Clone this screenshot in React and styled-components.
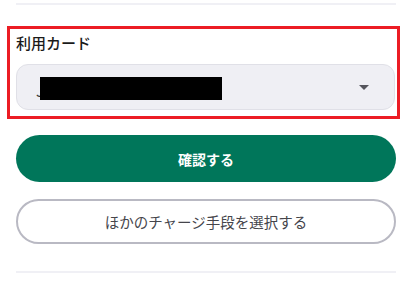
import React from 'react';
import styled, { createGlobalStyle } from 'styled-components';

const GlobalStyle = createGlobalStyle`
  html, body {
    margin: 0;
    padding: 0;
    background: #fff;
    font-family: "Noto Sans CJK JP", "Noto Sans", sans-serif;
  }
`;

const Page = styled.div`
  width: 412px;
  padding: 3px 16px 0;
  box-sizing: border-box;
`;

const Divider = styled.div`
  height: 2px;
  background: #f0f0f5;
  margin-top: ${props => props.top || 0}px;
`;

const Highlight = styled.section`
  margin: 21px -4px 0 -9px;
  border: 3px solid #ec1c24;
  padding: 3px 2px 6px 6px;
`;

const Label = styled.div`
  font-size: 15px;
  line-height: 22px;
  font-weight: 500;
  color: #1a1a1a;
`;

const Select = styled.div`
  position: relative;
  margin-top: 10px;
  height: 46px;
  box-sizing: border-box;
  border: 1px solid #e0e0e7;
  border-radius: 12px;
  background: #efeff4;
  display: flex;
  align-items: center;
  padding: 0 25px 0 19px;
`;

const CardText = styled.span`
  flex: 1;
  font-size: 15px;
  color: #333;
  padding-top: 6px;
`;

const Redact = styled.span`
  position: absolute;
  left: 23px;
  top: 12px;
  width: 182px;
  height: 23px;
  background: #000;
`;

const Caret = styled.span`
  width: 0;
  height: 0;
  border-left: 5px solid transparent;
  border-right: 5px solid transparent;
  border-top: 5px solid #55555c;
`;

const Button = styled.button`
  display: block;
  width: 100%;
  box-sizing: border-box;
  font-family: inherit;
  cursor: pointer;
  border-radius: 24px;
  height: ${props => (props.primary ? 47 : 45)}px;
  margin-top: ${props => props.gap}px;
  background: ${props => (props.primary ? '#00765a' : '#fff')};
  color: ${props => (props.primary ? '#fff' : '#45454b')};
  font-size: ${props => (props.primary ? 14 : 14.5)}px;
  font-weight: ${props => (props.primary ? 700 : 400)};
  border: ${props => (props.primary ? 'none' : '2px solid #b9b9c3')};
`;

export default function App() {
  return (
    <Page>
      <GlobalStyle />
      <Divider />
      <Highlight>
        <Label>利用カード</Label>
        <Select>
          <CardText>J</CardText>
          <Redact />
          <Caret />
        </Select>
      </Highlight>
      <Button primary gap={16}>確認する</Button>
      <Button gap={17}>ほかのチャージ手段を選択する</Button>
      <Divider top={27} />
    </Page>
  );
}
